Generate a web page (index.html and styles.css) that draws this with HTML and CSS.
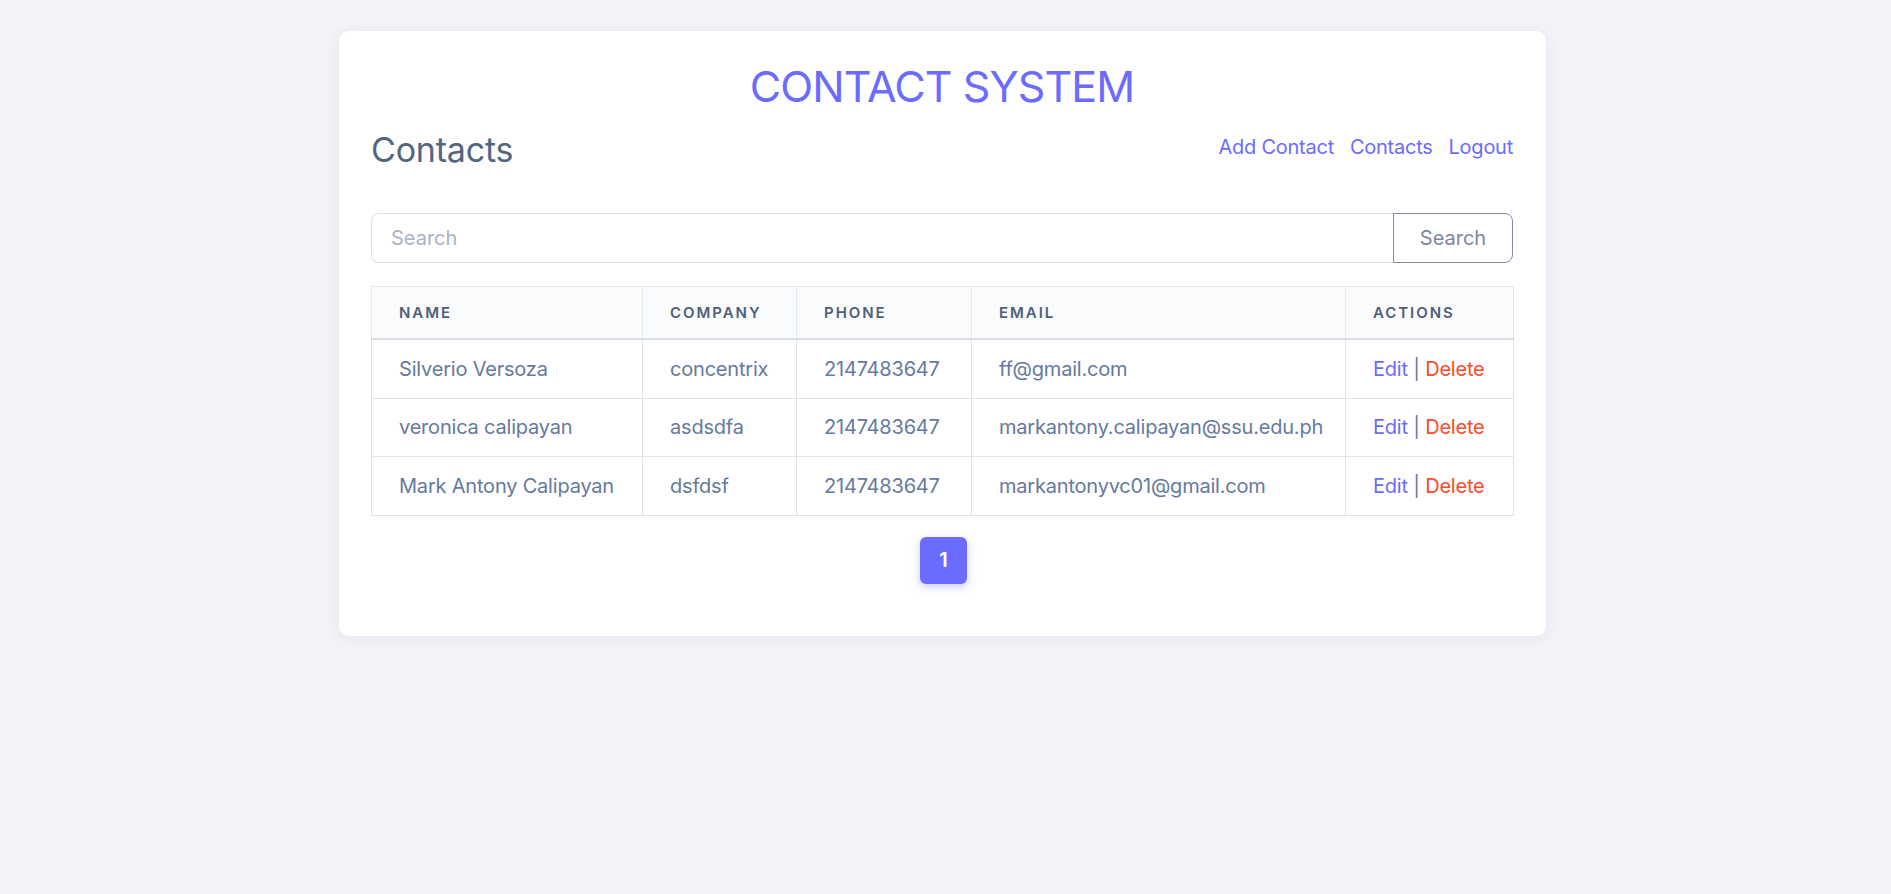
FILE: index.html
```html
<!DOCTYPE html>
<html lang="en">
<head>
<meta charset="utf-8">
<title>Contact System</title>
<link rel="stylesheet" href="styles.css">
</head>
<body>
<main class="card">
  <h1 class="title">CONTACT SYSTEM</h1>
  <div class="head">
    <h2 class="heading">Contacts</h2>
    <nav class="nav">
      <a href="#">Add Contact</a>
      <a href="#">Contacts</a>
      <a href="#">Logout</a>
    </nav>
  </div>
  <form class="search">
    <input class="search-input" type="text" placeholder="Search">
    <button class="search-btn" type="button">Search</button>
  </form>
  <table class="table">
    <colgroup>
      <col class="c-name">
      <col class="c-company">
      <col class="c-phone">
      <col class="c-email">
      <col class="c-actions">
    </colgroup>
    <thead>
      <tr>
        <th>Name</th>
        <th>Company</th>
        <th>Phone</th>
        <th>Email</th>
        <th>Actions</th>
      </tr>
    </thead>
    <tbody>
      <tr class="first">
        <td>Silverio Versoza</td>
        <td>concentrix</td>
        <td>2147483647</td>
        <td>ff@gmail.com</td>
        <td><a class="edit" href="#">Edit</a> | <a class="delete" href="#">Delete</a></td>
      </tr>
      <tr>
        <td>veronica calipayan</td>
        <td>asdsdfa</td>
        <td>2147483647</td>
        <td>markantony.calipayan@ssu.edu.ph</td>
        <td><a class="edit" href="#">Edit</a> | <a class="delete" href="#">Delete</a></td>
      </tr>
      <tr>
        <td>Mark Antony Calipayan</td>
        <td>dsfdsf</td>
        <td>2147483647</td>
        <td>markantonyvc01@gmail.com</td>
        <td><a class="edit" href="#">Edit</a> | <a class="delete" href="#">Delete</a></td>
      </tr>
    </tbody>
  </table>
  <div class="pagination">
    <a class="page active" href="#">1</a>
  </div>
</main>
</body>
</html>
```
FILE: styles.css
```css
html, body {
  margin: 0;
  padding: 0;
}
body {
  background: #f3f3f8;
  font-family: Inter, "Open Sans", "Liberation Sans", sans-serif;
  color: #66799e;
  min-height: 894px;
}
.card {
  box-sizing: border-box;
  width: 1207px;
  margin: 31px 0 0 339px;
  padding: 29px 33px 52px 32px;
  background: #ffffff;
  border-radius: 10px;
  box-shadow: 0 2px 18px rgba(40, 40, 80, 0.07);
}
.title {
  margin: 0;
  font-size: 43px;
  line-height: 53px;
  font-weight: 400;
  letter-spacing: -0.9px;
  color: #6b6bff;
  text-align: center;
}
.head {
  display: flex;
  justify-content: space-between;
  align-items: flex-start;
  margin-top: 16px;
}
.heading {
  margin: 0;
  font-size: 34px;
  line-height: 41px;
  font-weight: 400;
  letter-spacing: -0.2px;
  color: #526681;
}
.nav {
  display: flex;
  gap: 16px;
  margin-top: 3px;
  font-size: 20px;
  line-height: 30px;
  letter-spacing: -0.25px;
}
.nav a {
  color: #6b6bff;
  text-decoration: none;
}
.search {
  display: flex;
  margin: 43px 0 0;
}
.search-input {
  flex: 1;
  box-sizing: border-box;
  height: 50px;
  padding: 0 19px;
  border: 1px solid #dde1e7;
  border-right: none;
  border-radius: 8px 0 0 8px;
  font-family: inherit;
  font-size: 20px;
  color: #66799e;
  outline: none;
}
.search-input::placeholder {
  color: #a9b3c2;
}
.search-btn {
  box-sizing: border-box;
  width: 120px;
  height: 50px;
  border: 1px solid #7f8ca3;
  border-radius: 0 8px 8px 0;
  background: #ffffff;
  font-family: inherit;
  font-size: 20px;
  color: #7b879c;
  padding: 0;
}
.table {
  width: 1142px;
  table-layout: fixed;
  margin-top: 23px;
  border-collapse: collapse;
  border: 1px solid #dfe3e8;
}
.c-name { width: 271px; }
.c-company { width: 154px; }
.c-phone { width: 175px; }
.c-email { width: 374px; }
.c-actions { width: 168px; }
.table th {
  background: #f9fbfc;
  text-align: left;
  font-size: 15px;
  font-weight: 600;
  letter-spacing: 0.13em;
  text-transform: uppercase;
  color: #4f5f78;
  height: 51px;
  padding: 0 27px;
  border: 1px solid #e6e9ee;
  border-bottom: 2px solid #d9dee4;
}
.table td {
  font-size: 20px;
  line-height: 30px;
  height: 58.5px;
  box-sizing: border-box;
  padding: 0 27px;
  border: 1px solid #dfe3e8;
  color: #66799e;
  white-space: nowrap;
  letter-spacing: -0.2px;
}
.table tr.first td {
  height: 59px;
}
.table td a {
  text-decoration: none;
}
.edit { color: #6b6bff; }
.delete { color: #fb4b2b; }
.pagination {
  display: flex;
  justify-content: center;
  margin-top: 21px;
  padding-left: 3px;
}
.page {
  display: flex;
  align-items: center;
  justify-content: center;
  width: 47px;
  height: 47px;
  border-radius: 6px;
  background: #6b6bff;
  color: #ffffff;
  font-size: 20px;
  font-weight: 600;
  text-decoration: none;
  box-shadow: 0 3px 8px rgba(107, 107, 255, 0.35);
}
```
